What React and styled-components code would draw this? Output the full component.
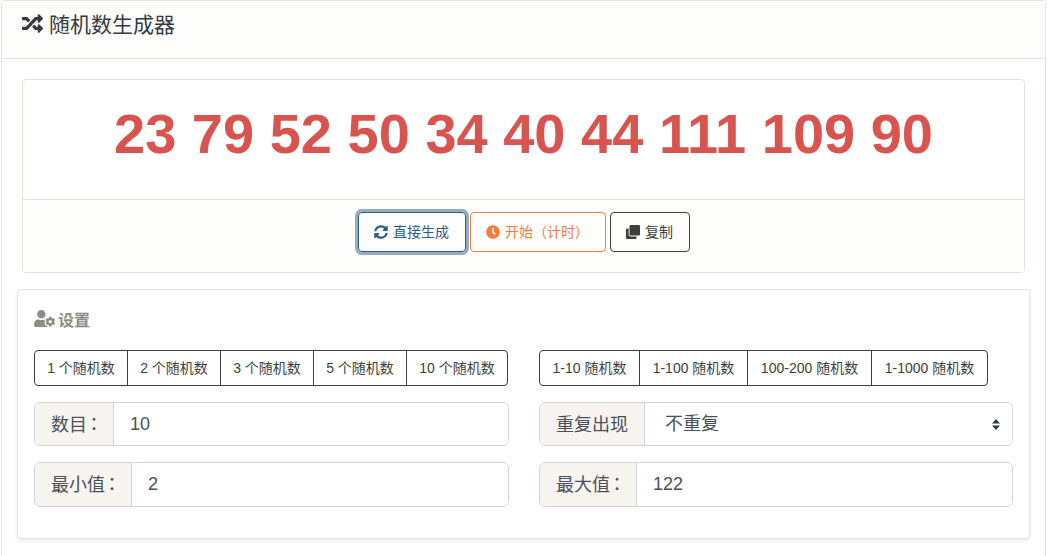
import React from "react";
import styled, { createGlobalStyle } from "styled-components";
import { FaRandom, FaSyncAlt, FaClock, FaClone, FaUserCog } from "react-icons/fa";

const FONT = `"Liberation Sans", "Noto Sans CJK SC", sans-serif`;

const GlobalStyle = createGlobalStyle`
  * {
    box-sizing: border-box;
  }
  html, body {
    margin: 0;
    padding: 0;
    background: #fff;
    font-family: ${FONT};
    color: #343a40;
    overflow: hidden;
  }
`;

const Page = styled.div`
  width: 1047px;
  height: 556px;
  overflow: hidden;
  padding: 0 1px;
`;

const MainCard = styled.div`
  width: 1045px;
  height: 600px;
  border: 1px solid #e8e2d9;
  border-radius: 4px;
`;

const CardHeader = styled.div`
  height: 58px;
  padding: 0 20px 13px;
  display: flex;
  align-items: center;
  gap: 6px;
  background: #fdfdfb;
  border-bottom: 1px solid #e8e2d9;
  font-size: 21px;
  color: #343a40;
  svg {
    font-size: 21px;
  }
`;

const CardBody = styled.div`
  padding: 20px 15px 0;
`;

const ResultCard = styled.div`
  width: 1003px;
  height: 194px;
  margin: 0 0 16px 5px;
  border: 1px solid #e8e2d9;
  border-radius: 4px;
  display: flex;
  flex-direction: column;
`;

const Numbers = styled.div`
  height: 119px;
  display: flex;
  align-items: center;
  justify-content: center;
  padding-bottom: 12px;
  font-size: 56px;
  font-weight: 700;
  color: #d9534f;
`;

const Actions = styled.div`
  flex: 1;
  display: flex;
  justify-content: center;
  align-items: flex-start;
  gap: 4px;
  padding-top: 12px;
  background: #fdfdfb;
  border-top: 1px solid #e8e2d9;
`;

const ActionButton = styled.button`
  height: 40px;
  width: ${(p) => p.$width}px;
  padding: 0 0 2px;
  display: inline-flex;
  align-items: center;
  justify-content: center;
  gap: 5px;
  background: transparent;
  border: 1px solid ${(p) => p.$color};
  border-radius: 4px;
  color: ${(p) => p.$color};
  font-family: ${FONT};
  font-size: 14px;
  box-shadow: ${(p) => (p.$focused ? "0 0 0 3px rgba(47, 90, 137, 0.5)" : "none")};
  svg {
    font-size: 14px;
    margin-top: 2px;
  }
`;

const SettingsCard = styled.div`
  width: 1013px;
  height: 250px;
  padding: 16px;
  background: #fff;
  border: 1px solid #e8e2d9;
  border-radius: 4px;
  box-shadow: 0 2px 4px rgba(0, 0, 0, 0.08);
`;

const SettingsTitle = styled.div`
  height: 28px;
  display: flex;
  align-items: center;
  gap: 3px;
  margin-bottom: 16px;
  padding-bottom: 3px;
  font-size: 16px;
  font-weight: 700;
  color: #8e8c84;
  svg {
    font-size: 21px;
  }
`;

const Columns = styled.div`
  display: grid;
  grid-template-columns: 475px 474px;
  gap: 30px;
`;

const Column = styled.div`
  display: flex;
  flex-direction: column;
`;

const PresetGroup = styled.div`
  display: flex;
  align-self: flex-start;
  height: 36px;
  margin-bottom: 16px;
`;

const Preset = styled.button`
  width: ${(p) => p.$width}px;
  height: 36px;
  padding: 0 0 2px;
  margin-left: -1px;
  background: #fff;
  border: 1px solid #3e3f3a;
  color: #3e3f3a;
  font-family: ${FONT};
  font-size: 14px;
  white-space: nowrap;
  &:first-child {
    margin-left: 0;
    border-radius: 4px 0 0 4px;
  }
  &:last-child {
    border-radius: 0 4px 4px 0;
  }
`;

const Field = styled.div`
  display: flex;
  height: ${(p) => p.$height}px;
  margin-bottom: 16px;
  border: 1px solid #ced4da;
  border-radius: 6px;
  overflow: hidden;
  position: relative;
`;

const FieldLabel = styled.span`
  width: ${(p) => p.$width}px;
  flex: none;
  padding: 0 0 3px 16px;
  display: flex;
  align-items: center;
  background: #f8f5f0;
  border-right: 1px solid #ced4da;
  font-size: 18px;
  color: #495057;
  white-space: nowrap;
`;

// the fullwidth colon sits centred in the reference, as in the TC face
const Colon = styled.span`
  margin-left: -2px;
  font-family: "Noto Sans CJK TC", sans-serif;
`;

const FieldInput = styled.input`
  flex: 1;
  min-width: 0;
  padding: 0 17px 0 16px;
  border: 0;
  outline: 0;
  font-family: ${FONT};
  font-size: 18px;
  color: #495057;
`;

const FieldSelect = styled.select`
  flex: 1;
  min-width: 0;
  padding: 0 20px;
  border: 0;
  outline: 0;
  appearance: none;
  background: #fff;
  font-family: ${FONT};
  font-size: 18px;
  color: #495057;
`;

const SelectArrow = styled.svg`
  position: absolute;
  right: 12px;
  top: 16px;
  width: 8px;
  height: 11px;
  pointer-events: none;
`;

const countPresets = [
  ["1 个随机数", 94],
  ["2 个随机数", 94],
  ["3 个随机数", 94],
  ["5 个随机数", 94],
  ["10 个随机数", 102],
];

const rangePresets = [
  ["1-10 随机数", 101],
  ["1-100 随机数", 109],
  ["100-200 随机数", 125],
  ["1-1000 随机数", 117],
];

export default function App() {
  return (
    <Page>
      <GlobalStyle />
      <MainCard>
        <CardHeader>
          <FaRandom />
          随机数生成器
        </CardHeader>
        <CardBody>
          <ResultCard>
            <Numbers>23 79 52 50 34 40 44 111 109 90</Numbers>
            <Actions>
              <ActionButton $width={108} $color="#2f5a89" $focused>
                <FaSyncAlt />
                直接生成
              </ActionButton>
              <ActionButton $width={136} $color="#f47c3c">
                <FaClock />
                开始（计时）
              </ActionButton>
              <ActionButton $width={80} $color="#3e3f3a">
                <FaClone />
                复制
              </ActionButton>
            </Actions>
          </ResultCard>
          <SettingsCard>
            <SettingsTitle>
              <FaUserCog />
              设置
            </SettingsTitle>
            <Columns>
              <Column>
                <PresetGroup>
                  {countPresets.map(([text, width]) => (
                    <Preset key={text} $width={width}>{text}</Preset>
                  ))}
                </PresetGroup>
                <Field $height={44}>
                  <FieldLabel $width={79}>数目<Colon>：</Colon></FieldLabel>
                  <FieldInput defaultValue="10" />
                </Field>
                <Field $height={45}>
                  <FieldLabel $width={97}>最小值<Colon>：</Colon></FieldLabel>
                  <FieldInput defaultValue="2" />
                </Field>
              </Column>
              <Column>
                <PresetGroup>
                  {rangePresets.map(([text, width]) => (
                    <Preset key={text} $width={width}>{text}</Preset>
                  ))}
                </PresetGroup>
                <Field $height={44}>
                  <FieldLabel $width={105}>重复出现</FieldLabel>
                  <FieldSelect defaultValue="no">
                    <option value="no">不重复</option>
                    <option value="yes">重复</option>
                  </FieldSelect>
                  <SelectArrow viewBox="0 0 8 11">
                    <path d="M4 0 L8 4.5 H0 Z M0 6.5 H8 L4 11 Z" fill="#343a40" />
                  </SelectArrow>
                </Field>
                <Field $height={45}>
                  <FieldLabel $width={97}>最大值<Colon>：</Colon></FieldLabel>
                  <FieldInput defaultValue="122" />
                </Field>
              </Column>
            </Columns>
          </SettingsCard>
        </CardBody>
      </MainCard>
    </Page>
  );
}
